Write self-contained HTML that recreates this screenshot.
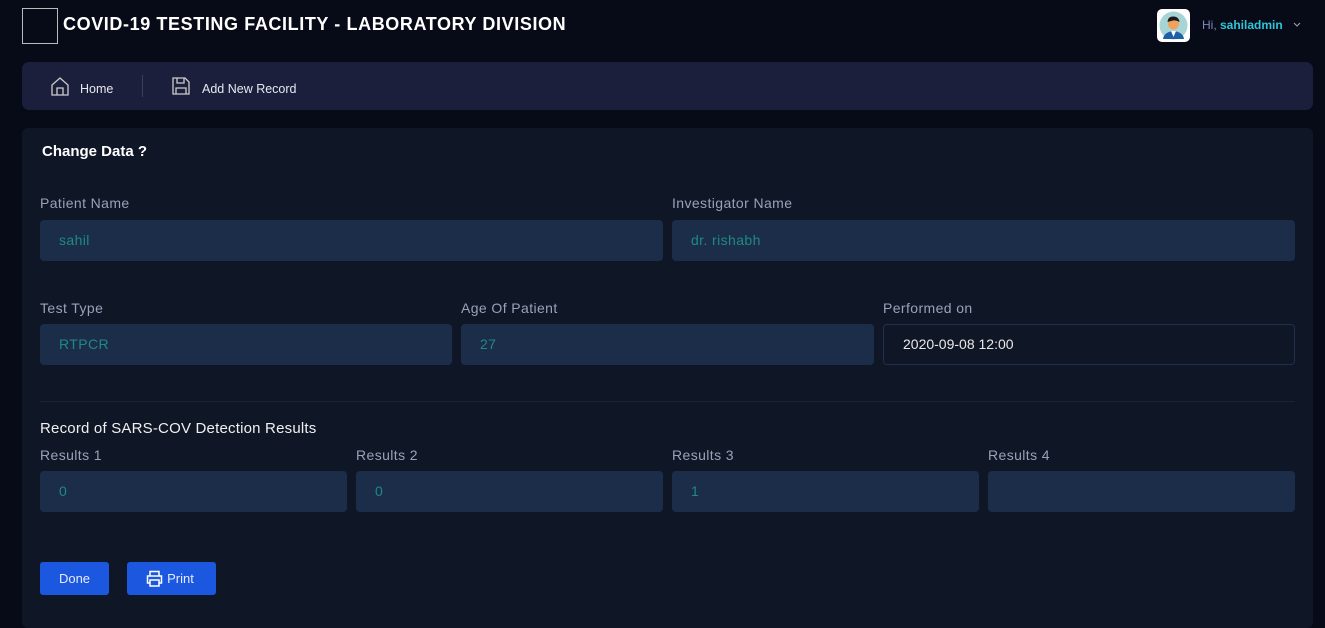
<!DOCTYPE html>
<html><head><meta charset="utf-8"><style>
*{box-sizing:border-box;margin:0;padding:0}
body{width:1325px;height:613px;overflow:hidden;background:#070a17;font-family:"Liberation Sans",sans-serif;position:relative;color:#fff}
.abs{position:absolute}
.logo{left:22px;top:8px;width:36px;height:36px;border:1px solid #bbb}
.title{left:63px;top:14px;font-size:18px;font-weight:bold;letter-spacing:.6px}
.nav{left:22px;top:62px;width:1291px;height:48px;background:#1b1f3b;border-radius:7px}
.card{left:22px;top:128px;width:1291px;height:500px;background:#0f1626;border-radius:6px}
.lbl{font-size:14px;color:#98a2b8;letter-spacing:.4px}
.inp{height:41px;background:#1c2d4a;border-radius:4px;color:#1f8a80;font-size:14px;padding:0 19px;line-height:41px;letter-spacing:.4px}
.btn{background:#1c57e0;border-radius:3px;height:33px;top:562px;font-size:13px;line-height:33px;text-align:center;color:#e6ecff}
</style></head><body>
<div class="abs logo"></div>
<div class="abs title">COVID-19 TESTING FACILITY - LABORATORY DIVISION</div>
<svg class="abs" style="left:1157px;top:9px" width="33" height="33" viewBox="0 0 33 33"><rect width="33" height="33" rx="5" fill="#fff"/><circle cx="16.5" cy="16.5" r="14" fill="#a7d4d4"/><path d="M6 30 Q7 23 16.5 22 Q26 23 27 30 Z" fill="#1f5fa8"/><path d="M14 22 h5 l-2.5 6z" fill="#fff"/><circle cx="16.5" cy="15" r="5.5" fill="#f0a35c"/><path d="M10.5 13 Q11 7 17 7.5 Q22 8 22.5 13 Q19 11 16 11.5 Z" fill="#1a1a1a"/></svg>
<div class="abs" style="left:1202px;top:18px;font-size:12px;color:#7a8ab8">Hi, <span style="color:#2ec6d9;font-weight:bold">sahiladmin</span></div>
<svg class="abs" style="left:1293px;top:22px" width="8" height="6"><path d="M1 1l3 3 3-3" stroke="#9aa" fill="none"/></svg>
<div class="abs nav"></div>
<svg class="abs" style="left:50px;top:76px" width="20" height="21" viewBox="0 0 20 21"><path d="M2 9 L10 2 L18 9 V19 H2 Z M7 19 V12 H13 V19" fill="none" stroke="#ccc" stroke-width="1.3"/></svg>
<div class="abs" style="left:80px;top:82px;font-size:12.5px;color:#e8e8f0">Home</div>
<div class="abs" style="left:142px;top:75px;width:1px;height:22px;background:#3a3f5c"></div>
<svg class="abs" style="left:171px;top:76px" width="20" height="20" viewBox="0 0 20 20"><path d="M2 2 H14 L18 6 V18 H2 Z M6 2 V7 H13 V2 M5 18 V12 H15 V18" fill="none" stroke="#ccc" stroke-width="1.3"/></svg>
<div class="abs" style="left:202px;top:82px;font-size:12.5px;color:#e8e8f0">Add New Record</div>
<div class="abs card"></div>
<div class="abs" style="left:42px;top:143px;font-size:15px;font-weight:bold">Change Data ?</div>
<div class="abs lbl" style="left:40px;top:195px">Patient Name</div>
<div class="abs lbl" style="left:672px;top:195px">Investigator Name</div>
<div class="abs inp" style="left:40px;top:220px;width:623px">sahil</div>
<div class="abs inp" style="left:672px;top:220px;width:623px">dr. rishabh</div>
<div class="abs lbl" style="left:40px;top:300px">Test Type</div>
<div class="abs lbl" style="left:461px;top:300px">Age Of Patient</div>
<div class="abs lbl" style="left:883px;top:300px">Performed on</div>
<div class="abs inp" style="left:40px;top:324px;width:412px">RTPCR</div>
<div class="abs inp" style="left:461px;top:324px;width:413px">27</div>
<div class="abs inp" style="left:883px;top:324px;width:412px;background:#0f1626;border:1px solid #1e3050;color:#e8e8e8;line-height:39px;letter-spacing:0">2020-09-08 12:00</div>
<div class="abs" style="left:40px;top:401px;width:1255px;height:1px;background:#1a2438"></div>
<div class="abs" style="left:40px;top:420px;font-size:15px;color:#f0f0f0;letter-spacing:.2px">Record of SARS-COV Detection Results</div>
<div class="abs lbl" style="left:40px;top:447px">Results 1</div>
<div class="abs lbl" style="left:356px;top:447px">Results 2</div>
<div class="abs lbl" style="left:672px;top:447px">Results 3</div>
<div class="abs lbl" style="left:988px;top:447px">Results 4</div>
<div class="abs inp" style="left:40px;top:471px;width:307px">0</div>
<div class="abs inp" style="left:356px;top:471px;width:307px">0</div>
<div class="abs inp" style="left:672px;top:471px;width:307px">1</div>
<div class="abs inp" style="left:988px;top:471px;width:307px"></div>
<div class="abs btn" style="left:40px;width:69px">Done</div>
<div class="abs btn" style="left:127px;width:89px;padding-left:18px">Print</div>
<svg class="abs" style="left:146px;top:570px" width="17" height="17" viewBox="0 0 17 17"><path d="M4 6 V1.5 H13 V6 M4 13 H1.5 V6 H15.5 V13 H13 M4 10 H13 V16 H4 Z" fill="none" stroke="#fff" stroke-width="1.5"/></svg>
</body></html>
